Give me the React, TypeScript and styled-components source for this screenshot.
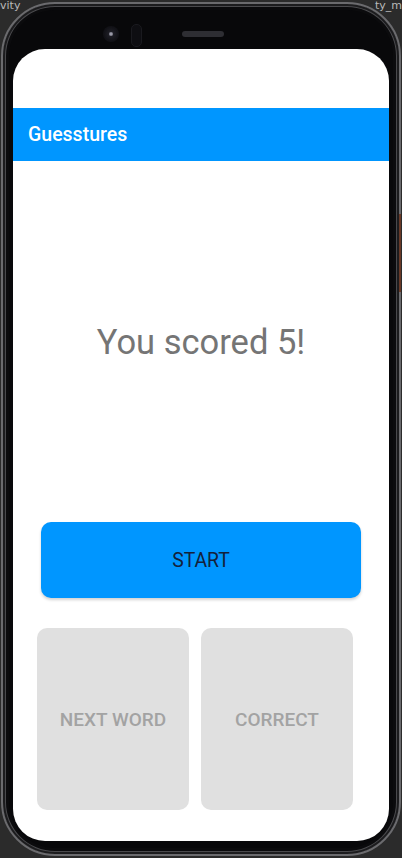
import { createGlobalStyle, styled } from "styled-components";

const GlobalStyle = createGlobalStyle`
  html, body {
    margin: 0;
    padding: 0;
    background: #2b2b2b;
    font-family: Roboto, "Liberation Sans", sans-serif;
  }
`;

const Backdrop = styled.div`
  position: relative;
  width: 402px;
  height: 858px;
  padding: 2px 1px;
  box-sizing: border-box;
  background: #2b2b2b;
  overflow: hidden;
`;

const WindowLabel = styled.span<{ $side: "left" | "right" }>`
  position: absolute;
  top: 0;
  ${(p) => (p.$side === "left" ? "left: 0;" : "right: 0;")}
  font-size: 11px;
  line-height: 12px;
  color: #b9b9b9;
  font-family: "DejaVu Sans", sans-serif;
`;

const Phone = styled.div`
  position: relative;
  box-sizing: border-box;
  width: 400px;
  height: 854px;
  padding: 45px 10px 13px 10px;
  border-radius: 54px;
  background: #08080a;
  border: 2px solid #6b6b6e;
  box-shadow: inset 0 0 0 2px #1c1c1e, inset 0 0 0 3px #4a4a4d,
    inset 0 0 0 6px #0b0b0d;
  display: flex;
  flex-direction: column;
`;

const SideButton = styled.div`
  position: absolute;
  right: -2px;
  top: 210px;
  width: 2px;
  height: 78px;
  background: #6a3a28;
`;

const Camera = styled.div`
  position: absolute;
  left: 100px;
  top: 22px;
  width: 16px;
  height: 16px;
  border-radius: 50%;
  background: radial-gradient(circle at 50% 50%, #9a9aa8 0 1.2px, #1d1d24 2.5px, #121217 60%, #0c0c10 100%);
`;

const Sensor = styled.div`
  position: absolute;
  left: 128px;
  top: 20px;
  width: 9px;
  height: 21px;
  border-radius: 5px;
  background: #0e0e12;
  border: 1px solid #1a1a1f;
`;

const Speaker = styled.div`
  position: absolute;
  left: 179px;
  top: 27px;
  width: 42px;
  height: 6px;
  border-radius: 3px;
  background: #2e2e33;
`;

const Screen = styled.div`
  flex: 1;
  background: #ffffff;
  border-radius: 32px;
  overflow: hidden;
  display: flex;
  flex-direction: column;
`;

const StatusArea = styled.div`
  height: 59px;
`;

const AppBar = styled.div`
  height: 53px;
  background: #0096ff;
  display: flex;
  align-items: center;
  padding: 0 15px;
  color: #ffffff;
  font-size: 19.5px;
  font-weight: 500;
`;

const Score = styled.div`
  margin-top: 161px;
  text-align: center;
  font-size: 34.5px;
  line-height: 40px;
  color: #757575;
`;

const StartButton = styled.button`
  margin: 160px 28px 0 28px;
  height: 76px;
  border: none;
  border-radius: 10px;
  background: #0096ff;
  color: #14213a;
  font-family: inherit;
  font-size: 19.4px;
  font-weight: 400;
  box-shadow: 0 2px 3px rgba(0, 0, 0, 0.18);
`;

const ButtonRow = styled.div`
  display: flex;
  gap: 12px;
  margin-top: 30px;
  padding-left: 24px;
`;

const GreyButton = styled.button`
  width: 152px;
  height: 182px;
  border: none;
  border-radius: 10px;
  background: #e0e0e0;
  color: #a3a3a3;
  font-family: inherit;
  font-size: 19px;
  font-weight: 500;
`;

export default function App() {
  return (
    <>
      <GlobalStyle />
      <Backdrop>
        <WindowLabel $side="left">vity</WindowLabel>
        <WindowLabel $side="right">ty_m</WindowLabel>
        <Phone>
          <SideButton />
          <Camera />
          <Sensor />
          <Speaker />
          <Screen>
            <StatusArea />
            <AppBar>Guesstures</AppBar>
            <Score>You scored 5!</Score>
            <StartButton>START</StartButton>
            <ButtonRow>
              <GreyButton>NEXT WORD</GreyButton>
              <GreyButton>CORRECT</GreyButton>
            </ButtonRow>
          </Screen>
        </Phone>
      </Backdrop>
    </>
  );
}
